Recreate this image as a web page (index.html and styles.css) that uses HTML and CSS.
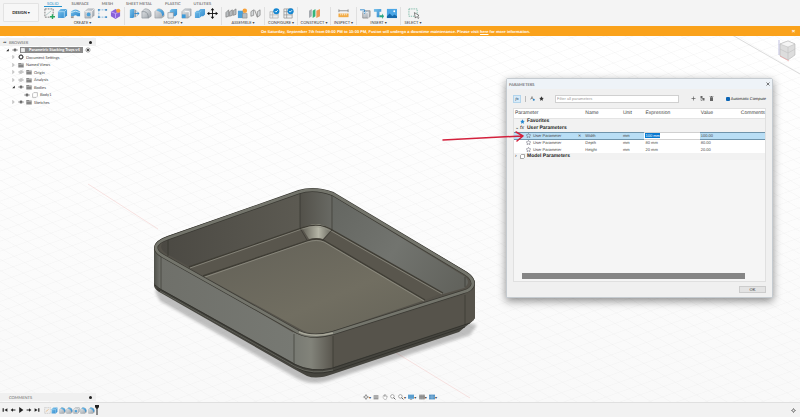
FILE: index.html
```html
<!DOCTYPE html>
<html lang="en">
<head>
<meta charset="utf-8">
<title>Parametric Stacking Trays</title>
<link rel="stylesheet" href="styles.css">
</head>
<body>
<svg class="defs" aria-hidden="true">
  <defs>
    <linearGradient id="blue" x1="0" y1="0" x2="1" y2="1"><stop offset="0" stop-color="#7cc4ec"/><stop offset="1" stop-color="#2d87cc"/></linearGradient>
    <linearGradient id="steel" x1="0" y1="0" x2="1" y2="1"><stop offset="0" stop-color="#e4e7ea"/><stop offset="1" stop-color="#9da4aa"/></linearGradient>
  </defs>
  <symbol id="eye" viewBox="0 0 10 8"><path d="M.7 4Q5-.8 9.3 4 5 8.8.7 4Z" fill="#fff" stroke="#777"/><circle cx="5" cy="4" r="1.9" fill="#666"/></symbol>
  <symbol id="eye-off" viewBox="0 0 10 8"><path d="M.7 4Q5-.8 9.3 4 5 8.8.7 4Z" fill="none" stroke="#aaa"/><circle cx="5" cy="4" r="1.6" fill="none" stroke="#aaa"/><path d="M2 8 8 0" stroke="#bbb"/></symbol>
  <symbol id="folder" viewBox="0 0 10 10"><path d="M.5 1.5h4l1 1h4V9h-9Z" fill="#858585"/><path d="M.5 4h9" stroke="#c9c9c9"/></symbol>
  <symbol id="closed" viewBox="0 0 6 8"><path d="m1.5 1 3 3-3 3Z" fill="#fff" stroke="#888"/></symbol>
  <symbol id="open" viewBox="0 0 6 8"><path d="M5.5 1.5v5h-5Z" fill="#222"/></symbol>
  <symbol id="star" viewBox="0 0 10 10"><path d="m5 .5 1.4 3 3.2.4-2.4 2.2.7 3.3L5 7.8 2.100 9.400l.7-3.300L.4 3.900l3.200-.4Z"/></symbol>
  <symbol id="box" viewBox="0 0 12 12"><path d="m1 4 3-3h7v7l-3 3H1Z" fill="url(#blue)"/><path d="M1 4h7v7M8 4l3-3" fill="none" stroke="#b9e0f6" stroke-width=".8"/></symbol>
  <symbol id="fillet" viewBox="0 0 12 12"><path d="M1 11V4l3-3h2q5 1 5 6v2l-3 2Z" fill="url(#steel)" stroke="#8c9399" stroke-width=".6"/><path d="M3 3 4 1h2q5 1 5 6l-2 2Q9 4 3 3Z" fill="url(#blue)"/></symbol>
  <symbol id="cup" viewBox="0 0 12 12"><path d="m1 4 3-3h7v7l-3 3H1Z" fill="url(#steel)" stroke="#8c9399" stroke-width=".6"/><path d="M1 4h7v7M8 4l3-3" fill="none" stroke="#fff" stroke-width=".7"/><circle cx="5" cy="7" r="2" fill="#4ba1da"/></symbol>
</svg>

<header class="ribbon">
  <button class="workspace">DESIGN <span class="caret">▾</span></button>
  <div class="tools">
    <nav class="tabs">
      <a class="tab active" href="#solid">SOLID</a><a class="tab" href="#surface">SURFACE</a><a class="tab" href="#mesh">MESH</a><a class="tab" href="#sheet">SHEET METAL</a><a class="tab" href="#plastic">PLASTIC</a><a class="tab" href="#utilities">UTILITIES</a>
    </nav>
    <div class="groups">
      <section class="group create">
        <div class="icons">
          <svg viewBox="0 0 12 12"><path d="M1 1h9v7M1 1v9h6" fill="none" stroke="#777" stroke-dasharray="2 1"/><path d="m2 8 6-5" stroke="#9bb" stroke-width=".8"/><path d="M6.500 9.500h5.500M9.250 6.800V12" stroke="#27a55c" stroke-width="1.500"/></svg>
          <svg><use href="#box"/></svg>
          <svg viewBox="0 0 12 12"><path d="M1 4q5-5 10 0v5H8q-2-2-4 0H1Z" fill="url(#blue)"/><path d="M1 5q5-3 10 0" fill="none" stroke="#c6e6f8"/><path d="M1 9h3v2H1Z" fill="#999"/></svg>
          <svg><use href="#cup"/></svg>
          <svg viewBox="0 0 12 12"><path d="M2 2h8M2 2v8M2 10h8" fill="none" stroke="#7fb8df" stroke-dasharray="2 1"/><path d="M1 1h2v2H1zM9 1h2v2H9zM1 9h2v2H1zM9 9h2v2H9z" fill="#4a91c8"/></svg>
          <svg viewBox="0 0 12 12"><path d="m1 4 5-3 5 3v5l-5 3-5-3Z" fill="#8a62d8"/><path d="m1 4 5 2 5-2M6 6v5" fill="none" stroke="#c4a6ff"/><circle cx="9" cy="3" r="2.300" fill="#f6a13b"/></svg>
        </div>
        <button class="label">CREATE <span class="caret">▾</span></button>
      </section>
      <section class="group modify">
        <div class="icons">
          <svg viewBox="0 0 12 12"><path d="m2 2 2-1h3v9l-2 1H2Z" fill="url(#blue)"/><path d="M7 2h2v8H7Z" fill="#9da4aa"/><path d="M7 6h5M10 4l2 2-2 2" fill="none" stroke="#2d87cc"/></svg>
          <svg viewBox="0 0 12 12"><path d="M1 11V4l3-3h2q5 1 5 6v2l-3 2Z" fill="url(#steel)" stroke="#8c9399" stroke-width=".7"/><path d="M1 4h3q4 1 4 7" fill="none" stroke="#7b8389" stroke-width=".7"/></svg>
          <svg><use href="#fillet"/></svg>
          <svg viewBox="0 0 12 12"><path d="m3 3 2-2h6v6L9 9H3Z" fill="url(#blue)"/><path d="M1 5h6v6H1Z" fill="#e4e7ea" stroke="#8c9399" stroke-width=".7"/></svg>
          <svg viewBox="0 0 12 12"><path d="m1 4 3-3h7v7l-3 3H1Z" fill="url(#steel)" stroke="#8c9399" stroke-width=".6"/><path d="M1 7h4v4H1Z" fill="#3b9ada"/><path d="M4 4h5v5" fill="none" stroke="#fff"/></svg>
          <svg viewBox="0 0 12 12"><path d="m5 3 2-2h5v6l-2 2H8l-2 2H1V5l2-2Z" fill="url(#blue)"/><path d="M1 5h5v6M6 5l2-2" fill="none" stroke="#86c9ee" stroke-width=".6"/></svg>
          <svg viewBox="0 0 12 12"><path d="M6 1v10M1 6h10" stroke="#111"/><path d="m6 0 2 2.500H4ZM6 12 4 9.500h4ZM0 6l2.500-2v4ZM12 6 9.500 8V4Z" fill="#111"/></svg>
        </div>
        <button class="label">MODIFY <span class="caret">▾</span></button>
      </section>
      <section class="group assemble">
        <div class="icons">
          <svg viewBox="0 0 12 12"><path d="M1 10V5l3-3v7ZM5 9V4l3-2v6ZM9 8V3l3-2v6Z" fill="#b9bdc0" stroke="#777" stroke-width=".7"/></svg>
          <svg viewBox="0 0 12 12"><path d="M1 3h6v8H1Z" fill="#4ba1da"/><path d="M6 6h5v5H6Z" fill="#b9bdc0" stroke="#888" stroke-width=".6"/><circle cx="8.500" cy="3" r="2.500" fill="#f6a13b"/></svg>
          <svg viewBox="0 0 12 12"><path d="M1 9V4l3-2v6ZM8 10V4l3-2v6Z" fill="#d5d8da" stroke="#777" stroke-width=".7"/><path d="m5 2 3 8" stroke="#777" stroke-width=".8"/></svg>
        </div>
        <button class="label">ASSEMBLE <span class="caret">▾</span></button>
      </section>
      <section class="group configure">
        <div class="icons">
          <svg viewBox="0 0 12 12"><path d="M1 4h9v7H1zM1 7.500h9M4 4v7" fill="#eee" stroke="#aaa" stroke-width=".7"/><circle cx="8" cy="3.500" r="3.300" fill="#1586d1"/><path d="m6.500 3.500 1 1 2-2" fill="none" stroke="#fff"/></svg>
          <svg viewBox="0 0 12 12"><path d="M1 1h9v10H1zM1 4h9M1 7.500h9M4 1v10" fill="#eee" stroke="#888" stroke-width=".7"/><circle cx="8.300" cy="3.500" r="3.300" fill="#1586d1"/><path d="m6.800 3.500 1 1 2-2" fill="none" stroke="#fff"/></svg>
        </div>
        <button class="label">CONFIGURE <span class="caret">▾</span></button>
      </section>
      <section class="group construct">
        <div class="icons"><svg viewBox="0 0 12 12"><path d="m0 3 3-2v8l-3 2Z" fill="#a6abb0"/><path d="m4 3 3-2v8l-3 2Z" fill="#35b479"/><path d="m8 3 4-2v8l-4 2Z" fill="#f09a55"/></svg></div>
        <button class="label">CONSTRUCT <span class="caret">▾</span></button>
      </section>
      <section class="group inspect">
        <div class="icons"><svg viewBox="0 0 12 12"><path d="M1 3h10M1 1.500v3M11 1.500v3" stroke="#777" stroke-width=".8"/><path d="M.5 6h11v4H.5Z" fill="#f2ab45"/><path d="M3 6v2M5 6v2M7 6v2M9 6v2" stroke="#fff" stroke-width=".7"/></svg></div>
        <button class="label">INSPECT <span class="caret">▾</span></button>
      </section>
      <section class="group insert">
        <div class="icons">
          <svg viewBox="0 0 12 12"><path d="m3 5 2-2h6v6l-2 2H3Z" fill="url(#steel)" stroke="#777" stroke-width=".7"/><path d="M0 2h5v3M3 4l2 2 2-2" fill="none" stroke="#2d87cc"/><path d="M3 5h6v6" fill="none" stroke="#fff" stroke-width=".7"/></svg>
          <svg viewBox="0 0 12 12"><path d="M1 1h8v3H7v6H4V4H1Z" fill="url(#blue)"/><path d="M7 8h3V6l2 3-2 3v-2H7Z" fill="#27a583"/></svg>
          <svg viewBox="0 0 12 12"><path d="M1 1h11v10H1Z" fill="#4ca7e6"/><path d="m1 9 3-3 3 3 2-2 3 2v2H1Z" fill="#176aab"/><circle cx="9" cy="3.500" r="1" fill="#fff"/></svg>
        </div>
        <button class="label">INSERT <span class="caret">▾</span></button>
      </section>
      <section class="group select">
        <div class="icons"><svg viewBox="0 0 12 12"><path d="M1 1h9v8H1Z" fill="none" stroke="#58a990" stroke-width=".8" stroke-dasharray="1.500 1"/><path d="m7 5 1 6 1.300-1.500L11 11.500l1-1L10.500 9 12 8.200Z" fill="#fff" stroke="#444" stroke-width=".7"/></svg></div>
        <button class="label">SELECT <span class="caret">▾</span></button>
      </section>
    </div>
  </div>
</header>

<div class="notice" role="status">
  <p>On Saturday, September 7th from 09:00 PM to 10:00 PM, Fusion will undergo a downtime maintenance. Please visit <a href="#status">here</a> for more information.</p>
  <button class="notice-close" aria-label="Dismiss">×</button>
</div>

<main class="canvas">
  <svg class="scene" viewBox="0 36 800 366" preserveAspectRatio="xMinYMin slice" role="img" aria-label="Tray model">
    <defs>
      <pattern id="grid" width="10" height="10" patternUnits="userSpaceOnUse" patternTransform="matrix(1.050 .630 1.180 -.420 0 0)"><path d="M0 0H10M0 0V10" fill="none" stroke="#ededed" stroke-width=".6"/></pattern>
      <linearGradient id="bg" x1="0" y1="0" x2="0" y2="1"><stop offset="0" stop-color="#fff"/><stop offset="1" stop-color="#f9f9f9"/></linearGradient>
      <linearGradient id="wallL" x1="0" y1="0" x2="1" y2="0"><stop offset="0" stop-color="#4b4943"/><stop offset="1" stop-color="#5c5a52"/></linearGradient>
      <linearGradient id="wallB" gradientUnits="userSpaceOnUse" x1="298" y1="0" x2="334" y2="0"><stop offset="0" stop-color="#514f48"/><stop offset="1" stop-color="#6a6b65"/></linearGradient>
      <linearGradient id="wallR" gradientUnits="userSpaceOnUse" x1="335" y1="205" x2="460" y2="285"><stop offset="0" stop-color="#656762"/><stop offset=".5" stop-color="#72746f"/><stop offset="1" stop-color="#62635d"/></linearGradient>
      <linearGradient id="floor" x1="0" y1="0" x2="1" y2="1"><stop offset="0" stop-color="#626057"/><stop offset=".6" stop-color="#716e61"/><stop offset="1" stop-color="#656358"/></linearGradient>
      <linearGradient id="front" x1="0" y1="0" x2="1" y2="0"><stop offset="0" stop-color="#6f706a"/><stop offset="1" stop-color="#777973"/></linearGradient>
      <linearGradient id="corner" x1="0" y1="0" x2="1" y2="0"><stop offset="0" stop-color="#777972"/><stop offset=".45" stop-color="#82837a"/><stop offset="1" stop-color="#59564e"/></linearGradient>
      <linearGradient id="cornerL" x1="0" y1="0" x2="1" y2="0"><stop offset="0" stop-color="#4f504a"/><stop offset="1" stop-color="#74756f"/></linearGradient>
      <linearGradient id="shine" x1="0" y1="0" x2="1" y2="0"><stop offset="0" stop-color="#656359"/><stop offset=".55" stop-color="#b5b5a6"/><stop offset="1" stop-color="#66655c"/></linearGradient>
      <filter id="soft" x="-10%" y="-10%" width="120%" height="120%"><feGaussianBlur stdDeviation="1.500"/></filter>
    </defs>
    <path d="M0 36H800V402H0Z" fill="url(#bg)"/>
    <path d="M0 36H800V402H0Z" fill="url(#grid)"/>
    <path d="M88 184 158 229M385 346 470 398" stroke="#f3c9c6" stroke-width=".5" fill="none"/>
    <path d="M680 5 800 74" stroke="#c4c4c4" stroke-width=".6"/>
    <path d="M155 291 160 301 298 379Q314 387 334 379L470 335 477 325 464 322 333 369 160 286Z" fill="#000" opacity=".24" filter="url(#soft)"/>
    <path d="M154 280V286Q155 290 161 293L294 369 307 376Q317 380 333 374L459 332 465 327 474 320 333 358 161 282Z" fill="#45443e"/>
    <path d="M154 248Q154 241 168 236L298 191Q313 186 333 193L467 272Q475 277 475 284V318L470 323 333 367Q312 374 294 363L160 288Q154 285 154 281Z" fill="#55524a"/>
    <path d="M168 239 300 193V230L191 268 165 253Q156 245 168 239Z" fill="url(#wallL)"/>
    <path d="M300 193Q315 188 333 196V231Q320 220 300 229Z" fill="url(#wallB)"/>
    <path d="M333 196 464 276Q472 282 464 288L443 294 333 231Z" fill="url(#wallR)"/>
    <path d="M189 267 302 228Q319 221 334 231L443 293 425 300 325 241Q316 238 307 240L203 276Z" fill="#59564d"/>
    <path d="M203 276 307 241Q317 237 325 241L425 300 333 331Q313 337 300 329Z" fill="url(#floor)"/>
    <path d="M302 228Q316 220 332 229L323 239Q316 237 309 239Z" fill="url(#shine)"/>
    <path d="M189 267 302 228Q319 221 334 231L443 293M203 276 307 241Q317 237 325 241L425 300" fill="none" stroke="#3f3d35" stroke-width="1.400"/>
    <path d="M190 268 302 229Q318 223 333 232L442 294M205 277 307 242Q317 239 324 242L424 301" fill="none" stroke="#96958a" stroke-width=".7"/>
    <path d="M168 239V256M300 193V228L307 240M332 195V230L323 240M465 277V287" fill="none" stroke="#302f2a" stroke-width=".6"/>
    <path d="M161 255 294 333V363L161 289Z" fill="url(#front)"/>
    <path d="M154 249Q155 254 161 257V289Q154 286 154 281Z" fill="url(#cornerL)"/>
    <path d="M293 332Q313 342 333 335V368Q312 373 293 363Z" fill="url(#corner)"/>
    <path d="M333 335 465 295Q474 291 475 284V318Q473 322 465 324L333 367Z" fill="#56534b"/>
    <path d="M156 248Q156 242 168 238L299 192Q314 187 333 194L465 273Q473 278 473 284 472 290 463 292L333 333Q312 339 298 332L163 256Q156 252 156 248Z" fill="none" stroke="#3b3a34" stroke-width="4"/>
    <path d="M156 248Q156 242 168 238L299 192Q314 187 333 194L465 273Q473 278 473 284 472 290 463 292L333 333Q312 339 298 332L163 256Q156 252 156 248Z" fill="none" stroke="#74756c" stroke-width="2.800"/>
    <path d="M299 332Q313 338 333 333" fill="none" stroke="#aaa99b" stroke-width="1.500"/>
    <path d="M161 257V289M294 334V365M333 336V368M465 295V325" stroke="#34332e" stroke-width=".6"/>
    <path d="M155 285 160 289 294 364Q312 373 333 368L470 323M157 289 299 369Q313 376 333 371L465 327" fill="none" stroke="#2f2e29" stroke-width=".8"/>
    <path d="M160 291 296 367Q312 375 333 370" fill="none" stroke="#73746c" stroke-width=".7"/>
    <g>
      <path d="m780 44 8-3 7 3v11l-7 5-8-4Z" fill="#ddd" stroke="#aaa" stroke-width=".5"/><path d="m780 44 8 3 7-3-7-3Z" fill="#f5f5f5" stroke="#bbb" stroke-width=".5"/><path d="M788 47v13M780 49l8 4 7-4" fill="none" stroke="#bbb" stroke-width=".5"/><path d="M779 40v15" stroke="#99c" stroke-width=".6"/><path d="m780 56 9 5" stroke="#e99" stroke-width=".6"/>
    </g>
  </svg>

  <aside class="browser">
    <h2 class="bar"><span class="fold">◂◂</span>BROWSER<span class="dot"></span></h2>
    <ul class="tree">
      <li class="root"><svg class="tri"><use href="#open"/></svg><svg class="ico"><use href="#eye"/></svg><span class="chosen"><svg class="ico" viewBox="0 0 10 10"><path d="M1 1h6l2 2v6H1Z" fill="#eee" stroke="#666"/></svg>Parametric Stacking Trays v4</span><svg class="ico" viewBox="0 0 10 10"><circle cx="5" cy="5" r="3.500" fill="none" stroke="#666"/><circle cx="5" cy="5" r="1.800" fill="#222"/></svg></li>
      <li class="child"><svg class="tri"><use href="#closed"/></svg><svg class="ico" viewBox="0 0 10 10"><circle cx="5" cy="5" r="3" fill="none" stroke="#555" stroke-width="2"/><path d="M5 0v2M5 8v2M0 5h2M8 5h2M1.500 1.500 3 3M7 7l1.500 1.500M1.500 8.500 3 7M7 3l1.500-1.500" stroke="#555"/></svg>Document Settings</li>
      <li class="child"><svg class="tri"><use href="#closed"/></svg><svg class="ico"><use href="#folder"/></svg>Named Views</li>
      <li class="child"><svg class="tri"><use href="#closed"/></svg><svg class="ico"><use href="#eye-off"/></svg><svg class="ico"><use href="#folder"/></svg>Origin</li>
      <li class="child"><svg class="tri"><use href="#closed"/></svg><svg class="ico"><use href="#eye-off"/></svg><svg class="ico"><use href="#folder"/></svg>Analysis</li>
      <li class="child"><svg class="tri"><use href="#open"/></svg><svg class="ico"><use href="#eye"/></svg><svg class="ico"><use href="#folder"/></svg>Bodies</li>
      <li class="leaf"><svg class="ico"><use href="#eye"/></svg><svg class="ico" viewBox="0 0 10 10"><path d="M1 3 3 1h6v6L7 9H1Z" fill="#fff" stroke="#999"/></svg>Body1</li>
      <li class="child"><svg class="tri"><use href="#closed"/></svg><svg class="ico"><use href="#eye"/></svg><svg class="ico"><use href="#folder"/></svg>Sketches</li>
    </ul>
  </aside>

  <section class="dialog" role="dialog" aria-labelledby="dialog-title">
    <header class="dialog-head"><h1 id="dialog-title">PARAMETERS</h1><button class="close" aria-label="Close"><svg viewBox="0 0 8 8"><path d="m1 1 6 6M7 1 1 7" stroke="#333" stroke-width="1.300"/></svg></button></header>
    <div class="filters">
      <button class="fx on" aria-label="Functions"><i>fx</i></button>
      <span class="rule"></span>
      <button class="tool" aria-label="Text parameters"><svg viewBox="0 0 10 10"><path d="m1 7 3-6 2 5M2 5h3" fill="none" stroke="#555"/><circle cx="7.500" cy="7.500" r="2" fill="#2c83c4"/></svg></button>
      <button class="tool" aria-label="Favorites"><svg fill="#333"><use href="#star"/></svg></button>
      <input class="search" type="text" placeholder="Filter all parameters" aria-label="Filter all parameters">
      <button class="tool" aria-label="Add"><svg viewBox="0 0 10 10"><path d="M5 1v8M1 5h8" stroke="#555" stroke-width="1.300"/></svg></button>
      <button class="tool" aria-label="Copy"><svg viewBox="0 0 10 10"><path d="M1 0h4v5H1ZM5 4h4v5H5Z" fill="#666"/><path d="M2 6v3h2" fill="none" stroke="#555"/></svg></button>
      <button class="tool" aria-label="Delete"><svg viewBox="0 0 10 10"><path d="M2 2.500h6V10H2ZM1 1h8v1H1ZM4 0h2v1H4Z" fill="#666"/></svg></button>
      <label class="auto"><input type="checkbox" checked>Automatic Compute</label>
    </div>
    <div class="sheet">
      <table>
        <colgroup><col class="c-param"><col class="c-name"><col class="c-unit"><col class="c-expr"><col class="c-value"><col class="c-notes"></colgroup>
        <thead><tr><th>Parameter</th><th>Name</th><th>Unit</th><th>Expression</th><th>Value</th><th>Comments</th></tr></thead>
        <tbody>
          <tr class="section"><td colspan="6"><div class="cell heading"><span class="twist"></span><svg class="mark" fill="#2385d0"><use href="#star"/></svg>Favorites</div></td></tr>
          <tr class="section"><td colspan="6"><div class="cell heading"><span class="twist">⌄</span><i class="mark">fx</i>User Parameters</div></td></tr>
          <tr class="selected"><td><div class="cell entry"><svg class="mark" fill="none" stroke="#667"><use href="#star"/></svg>User Parameter<span class="pin">✕</span></div></td><td>Width</td><td>mm</td><td class="edit"><input type="text" value="100 mm" aria-label="Width expression"></td><td>100.00</td><td></td></tr>
          <tr><td><div class="cell entry"><svg class="mark" fill="none" stroke="#667"><use href="#star"/></svg>User Parameter</div></td><td>Depth</td><td>mm</td><td>80 mm</td><td>80.00</td><td></td></tr>
          <tr><td><div class="cell entry"><svg class="mark" fill="none" stroke="#667"><use href="#star"/></svg>User Parameter</div></td><td>Height</td><td>mm</td><td>20 mm</td><td>20.00</td><td></td></tr>
          <tr class="section"><td colspan="6"><div class="cell heading"><span class="twist">›</span><svg class="mark" viewBox="0 0 10 10"><path d="M1 3 3 1h6v6L7 9H1Z" fill="#fff" stroke="#555"/></svg>Model Parameters</div></td></tr>
        </tbody>
      </table>
      <div class="scroll"><div class="thumb"></div></div>
    </div>
    <footer class="dialog-foot"><button class="ok">OK</button></footer>
    <svg class="arrow" viewBox="0 0 84 14" aria-hidden="true"><path d="M1 9 80 5M74 1l7 4-6 5" fill="none" stroke="#d3203c" stroke-width="1.500" stroke-linecap="round" stroke-linejoin="round"/></svg>
  </section>

  <div class="comments bar">COMMENTS<span class="dot"></span></div>

  <nav class="view-tools" aria-label="View">
    <button aria-label="Orbit"><svg viewBox="0 0 10 10"><path d="M5 0v10M0 5h10" stroke="#777"/><circle cx="5" cy="5" r="2.500" fill="#eee" stroke="#666"/></svg><span class="caret">▾</span></button>
    <button aria-label="Look at"><svg viewBox="0 0 10 10"><path d="M1 2h8v7H1Z" fill="#999"/><path d="M1 5h8" stroke="#ddd"/></svg></button>
    <button aria-label="Pan"><svg viewBox="0 0 10 10"><path d="M2 6V3l1-1 1 2V1h1v3l1-3 1 1v3l2-1-2 5H4Z" fill="#fff" stroke="#888" stroke-width=".8"/></svg></button>
    <button aria-label="Zoom"><svg viewBox="0 0 10 10"><circle cx="4" cy="4" r="3" fill="#fff" stroke="#777"/><path d="m6 6 3 3" stroke="#555" stroke-width="1.500"/></svg></button>
    <button aria-label="Fit"><svg viewBox="0 0 10 10"><circle cx="4" cy="4" r="3" fill="#fff" stroke="#777"/><path d="m6 6 3 3" stroke="#555" stroke-width="1.500"/></svg><span class="caret">▾</span></button>
    <button aria-label="Display"><svg viewBox="0 0 10 10"><path d="M0 1h10v7H0Z" fill="#5b9fd0"/><path d="M3 9h4" stroke="#777"/></svg><span class="caret">▾</span></button>
    <button aria-label="Grid"><svg viewBox="0 0 10 10"><path d="M0 1h10v8H0Z" fill="#aaa"/><path d="M0 4h10M0 6.500h10M3.500 1v8M7 1v8" stroke="#777" stroke-width=".7"/></svg><span class="caret">▾</span></button>
    <button aria-label="Viewports"><svg viewBox="0 0 10 10"><path d="M0 1h10v8H0Z" fill="#5795c7"/><path d="M0 5h10M5 1v8" stroke="#a8cfee" stroke-width=".7"/></svg><span class="caret">▾</span></button>
  </nav>
</main>

<footer class="timeline">
  <div class="transport">
    <button aria-label="Start"><svg viewBox="0 0 10 10"><path d="M1 2h2v6H1ZM9 2v6L4 5Z" fill="#222"/></svg></button>
    <button aria-label="Back"><svg viewBox="0 0 10 10"><path d="M5 2v6L1 5ZM5 4h4v2H5Z" fill="#222"/></svg></button>
    <button aria-label="Play"><svg viewBox="0 0 10 10"><path d="m2 0 7 5-7 5Z" fill="#222"/></svg></button>
    <button aria-label="Forward"><svg viewBox="0 0 10 10"><path d="m5 2 4 3-4 3ZM1 4h4v2H1Z" fill="#222"/></svg></button>
    <button aria-label="End"><svg viewBox="0 0 10 10"><path d="M7 2h2v6H7ZM1 2l5 3-5 3Z" fill="#222"/></svg></button>
  </div>
  <div class="features">
    <svg viewBox="0 0 12 12"><path d="M1 1h10v10H1Z" fill="#eee" stroke="#bbb" stroke-dasharray="2 1"/><path d="m3 8 5-4" stroke="#e5a55b"/></svg>
    <svg><use href="#box"/></svg>
    <svg><use href="#fillet"/></svg>
    <svg><use href="#fillet"/></svg>
    <svg><use href="#cup"/></svg>
    <svg><use href="#fillet"/></svg>
    <svg><use href="#fillet"/></svg>
    <svg class="playhead" viewBox="0 0 4 10"><path d="M0 0h4v2L2.500 4v6h-1V4L0 2Z" fill="#222"/></svg>
  </div>
  <button class="settings" aria-label="Settings"><svg viewBox="0 0 10 10"><circle cx="5" cy="5" r="2.500" fill="none" stroke="#555" stroke-width="1.500"/><path d="M5 0v2M5 8v2M0 5h2M8 5h2" stroke="#555"/></svg></button>
</footer>
<script src="script.js"></script>
</body>
</html>
```
FILE: script.js
```js
// Open the first expression for editing with its value selected.
const field = document.querySelector('.edit input');
field.focus();
field.select();
```
FILE: styles.css
```css
* { box-sizing: border-box; }
body {
  margin: 0;
  height: 100vh;
  display: flex;
  flex-direction: column;
  overflow: hidden;
  background: #fff;
  color: #444;
  font: 4px/5px "Liberation Sans", Arial, sans-serif;
  text-rendering: geometricPrecision;
}
button {
  padding: 0;
  border: 0;
  background: none;
  color: inherit;
  font: inherit;
  display: flex;
  align-items: center;
  justify-content: center;
}
a { color: inherit; }
h1, h2, p, ul { margin: 0; padding: 0; font: inherit; list-style: none; }
svg { display: block; flex: none; overflow: visible; }
.defs { position: absolute; width: 0; height: 0; }
.caret { margin-left: 1px; font-family: "DejaVu Sans", sans-serif; }

.ribbon { display: flex; height: 26px; background: #f4f4f4; font-family: Lato, sans-serif; }
.workspace {
  width: 36px;
  margin: 3px 2px 4px 3px;
  border: 1px solid #e3e3e3;
  border-radius: 1px;
  background: #f7f7f7;
  font-weight: bold;
  color: #222;
}
.tabs { display: flex; height: 7px; padding-left: 6px; gap: 13px; }
.tab { padding-top: 1px; text-decoration: none; white-space: nowrap; }
.tab.active { margin: 0 -3px; padding: 1px 3px 0; color: #2390cb; border-bottom: 1px solid #2390cb; }
.groups { display: flex; }
.group { padding: 1px 2px 0; border-right: 1px solid #e0e0e0; }
.group:last-child { border-right: 0; }
.create { width: 84px; }
.modify { width: 97px; }
.assemble { width: 43px; }
.configure { width: 33px; }
.construct { width: 33px; }
.inspect { width: 26px; }
.insert { width: 44px; }
.select { width: 24px; }
.icons { display: flex; justify-content: space-around; }
.icons svg { width: 11px; height: 11px; }
.label { width: 100%; height: 6px; white-space: nowrap; }

.notice {
  display: flex;
  align-items: center;
  height: 10px;
  padding: 0 4px 0 0;
  background: #faa21b;
  color: #fff;
  font-weight: bold;
}
.notice p { flex: 1; text-align: center; }
.notice-close { width: 5px; height: 5px; font-size: 6px; }

.canvas { position: relative; flex: 1; min-height: 0; overflow: hidden; }
.scene { position: absolute; inset: 0; width: 100%; height: 100%; }

.bar { display: flex; align-items: center; height: 8px; padding: 0 4px 0 9px; background: #f0f0f0; color: #666; font-family: Lato, sans-serif; }
.dot { width: 3px; height: 3px; margin-left: auto; border-radius: 50%; background: #222; }
.browser { position: absolute; top: 2px; left: 0; width: 96px; font-family: Lato, sans-serif; }
.browser .bar { padding-left: 3px; }
.fold { width: 6px; font-size: 3px; color: #222; }
.tree { display: flex; flex-direction: column; height: 60px; }
.tree li { flex: 1; display: flex; align-items: center; gap: 2px; white-space: nowrap; }
.tree .root { padding-left: 6px; }
.tree .child { padding-left: 12px; }
.tree .leaf { padding-left: 24px; }
.tri { width: 3px; height: 4px; }
.ico { width: 6px; height: 6px; }
.tree .tri { margin-right: 1px; }
.chosen { display: flex; align-items: center; gap: 3px; height: 6px; padding: 0 3px 0 0; background: #8c8c8c; color: #fff; font-weight: bold; }

.dialog {
  position: absolute;
  top: 42px;
  right: 27px;
  width: 267px;
  height: 220px;
  display: flex;
  flex-direction: column;
  padding: 0 6px;
  border: 1px solid #c5cbd0;
  border-radius: 2px 2px 0 0;
  background: #f0f0f0;
  box-shadow: 0 3px 9px rgba(0, 0, 0, .45);
}
.dialog-head { display: flex; justify-content: space-between; align-items: center; height: 10px; margin: 0 -6px; padding: 0 2px; background: #eef3f8; font-family: Lato, sans-serif; }
.close svg { width: 4px; height: 4px; }
.filters { display: flex; align-items: center; height: 19px; gap: 4px; }
.fx { width: 8px; height: 8px; border: 1px solid #b4d5ec; background: #d8ebf8; color: #246; font: 5px/5px "Liberation Serif", serif; }
.rule { width: 1px; height: 6px; background: #bbb; }
.tool { width: 5px; height: 6px; }
.tool svg { width: 5px; height: 5px; }
.search {
  flex: 1;
  min-width: 0;
  height: 8px;
  margin: 0 8px 0 7px;
  padding: 0 1px;
  border: 1px solid #d0d0d0;
  background: #fff;
  font: inherit;
}
.search::placeholder { color: #999; }
.auto { display: flex; align-items: center; gap: 1px; margin-left: 8px; white-space: nowrap; color: #222; }
.auto input { appearance: none; width: 4px; height: 4px; margin: 0; border-radius: 1px; background: #0b65b5; }
.sheet { flex: 1; display: flex; flex-direction: column; border: 1px solid #e0e0e0; background: #f5f5f5; }
table { width: 100%; table-layout: fixed; border-collapse: collapse; }
.c-param { width: 28%; }
.c-name { width: 15%; }
.c-unit { width: 9%; }
.c-expr { width: 22%; }
.c-value { width: 16%; }
.c-notes { width: 10%; }
tr { height: 7px; background: #fff; }
th { height: 9px; padding: 0 1px; border-bottom: 1px solid #e4e4e4; text-align: left; font: 5px/5px "Liberation Sans", Arial, sans-serif; }
td { height: 7px; padding: 0 1px; line-height: 5px; white-space: nowrap; }
.section { background: #f2f2f2; color: #222; font-weight: bold; font-size: 5px; }
.cell { display: flex; align-items: center; gap: 2px; }
.twist { width: 3px; font-weight: normal; }
.mark { width: 5px; height: 5px; line-height: 5px; font-weight: normal; }
.entry { padding-left: 11px; }
.pin { margin-left: auto; padding-right: 2px; }
.selected { background: #b9def5; }
.selected td { border-top: 1px solid #6f94ab; border-bottom: 1px solid #6f94ab; }
.selected .edit { background: #fff; border-color: #d0d0d0; }
.edit input { display: block; width: 100%; height: 5px; padding: 0; border: 0; outline: 0; background: #fff; font: inherit; color: inherit; }
.edit input::selection { background: #0878d0; color: #fff; }
.scroll { display: flex; height: 6px; margin: auto 20px 2px 8px; }
.thumb { flex: 1; background: #858585; }
.dialog-foot { display: flex; justify-content: flex-end; align-items: center; height: 15px; }
.ok { width: 27px; height: 7px; border: 1px solid #ccc; background: #e3e3e3; color: #222; }
.arrow { position: absolute; left: -65px; top: 52px; width: 84px; height: 14px; }

.comments { position: absolute; left: 0; bottom: 1px; width: 96px; }
.view-tools { position: absolute; left: 50%; bottom: 2px; width: 74px; margin-left: -37px; display: flex; justify-content: space-between; }
.view-tools svg { width: 6px; height: 6px; }
.view-tools .caret { margin-left: 0; }

.timeline { display: flex; align-items: center; height: 15px; padding: 0 4px 0 2px; gap: 4px; border-top: 1px solid #e0e0e0; background: #f2f2f2; }
.transport { display: flex; gap: 2px; }
.transport svg { width: 6px; height: 6px; }
.features { display: flex; align-items: center; justify-content: space-between; width: 55px; }
.features svg { width: 7px; height: 7px; }
.features .playhead { width: 4px; height: 10px; }
.settings { margin-left: auto; }
.settings svg { width: 5px; height: 5px; }
```
